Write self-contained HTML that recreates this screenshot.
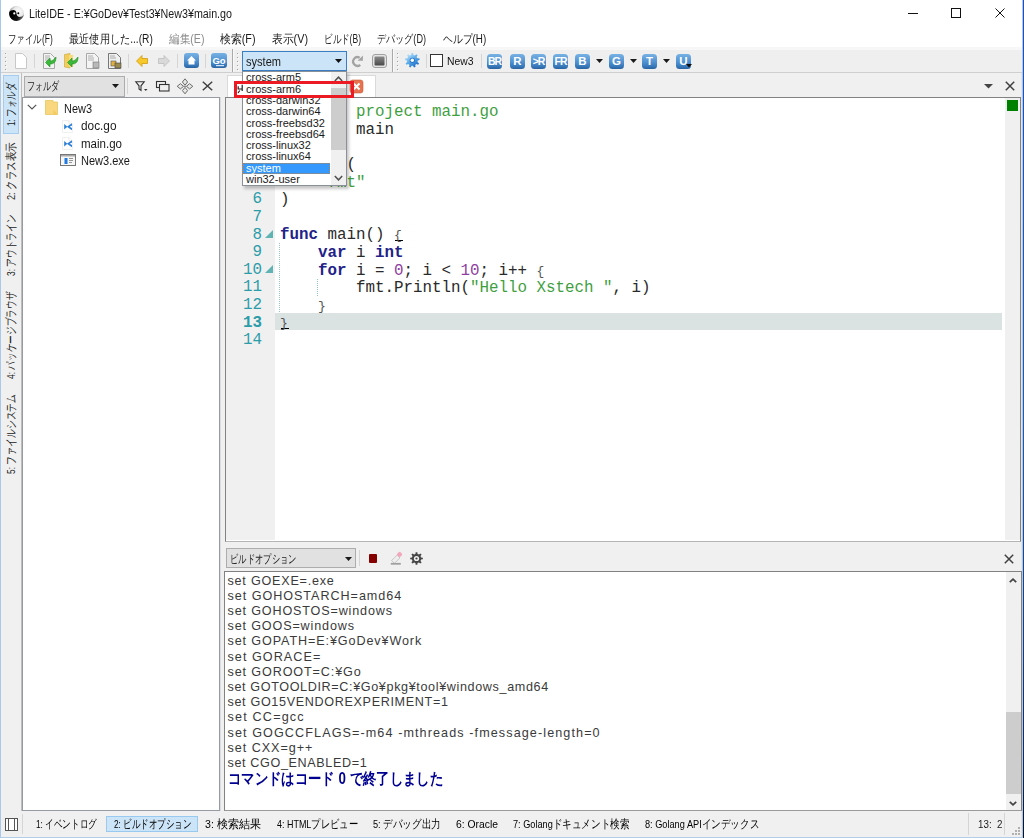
<!DOCTYPE html>
<html><head><meta charset="utf-8">
<style>
*{box-sizing:border-box;margin:0;padding:0}
html,body{width:1024px;height:838px;overflow:hidden}
body{position:relative;background:#f0f0f0;font-family:"Liberation Sans",sans-serif;color:#000;font-size:12px}
.a{position:absolute}
.t{position:absolute;white-space:pre;line-height:1}
svg{position:absolute;overflow:visible}
.code{position:absolute;font-family:"Liberation Mono",monospace;font-size:15.83px;line-height:17.6px;white-space:pre;color:#2a2a2a}
.kw{color:#222288;font-weight:bold}
.br{color:#555;font-size:13px}
.cm{color:#3f9f3f}
.st{color:#3f9f3f}
.nm{color:#8f3f9f}
.ln{position:absolute;font-family:"Liberation Mono",monospace;font-size:15.83px;line-height:17.6px;white-space:pre;color:#2b9ca8;text-align:right;width:40px}
</style></head><body>
<div class="a" style="left:0px;top:0px;width:1024px;height:47px;background:#fff"></div>
<div class="a" style="left:0px;top:47px;width:1024px;height:3px;background:#f7f7f7"></div>
<div class="a" style="left:0px;top:50px;width:1024px;height:22px;background:#efefef"></div>
<div class="a" style="left:0px;top:72px;width:1024px;height:1px;background:#cfcfcf"></div>
<svg style="left:8.8px;top:6px" width="15" height="15" viewBox="0 0 15 15">
<defs><radialGradient id="yw" cx="0.62" cy="0.38" r="0.62"><stop offset="0" stop-color="#fff"/><stop offset="0.55" stop-color="#e8e8e8"/><stop offset="1" stop-color="#8a8a8a"/></radialGradient>
<linearGradient id="yb" x1="0.2" y1="0.4" x2="1" y2="0.8"><stop offset="0" stop-color="#000"/><stop offset="0.55" stop-color="#151515"/><stop offset="1" stop-color="#8a8a8a"/></linearGradient></defs>
<circle cx="7.5" cy="7.5" r="7.4" fill="url(#yw)"/>
<path d="M0.1 7.5 A7.4 7.4 0 0 0 14.9 7.5 A3.7 3.7 0 0 1 7.5 7.5 A3.7 3.7 0 0 0 0.1 7.5 Z" fill="url(#yb)" transform="rotate(-5 7.5 7.5)"/>
<circle cx="5.3" cy="7.4" r="1.1" fill="#fff"/><circle cx="9.3" cy="7.2" r="1.0" fill="#000"/>
</svg>
<div id="t1" class="t" style="left:29px;top:7.5px;font-size:12px;color:#1a1a1a;transform:scaleX(0.8925);transform-origin:0 0;">LiteIDE - E:¥GoDev¥Test3¥New3¥main.go</div>
<div class="a" style="left:908px;top:13px;width:10px;height:1px;background:#111"></div>
<div class="a" style="left:951px;top:8px;width:10px;height:10px;border:1px solid #111"></div>
<svg style="left:995px;top:8px" width="10" height="10" viewBox="0 0 10 10"><path d="M0.5 0.5 L9.5 9.5 M9.5 0.5 L0.5 9.5" stroke="#111" stroke-width="1"/></svg>
<div id="t2" class="t" style="left:8px;top:33px;font-size:12px;color:#1a1a1a;transform:scaleX(0.7058);transform-origin:0 0;">ファイル(F)</div>
<div id="t3" class="t" style="left:69px;top:33px;font-size:12px;color:#1a1a1a;transform:scaleX(0.8493);transform-origin:0 0;">最近使用した...(R)</div>
<div id="t4" class="t" style="left:168.5px;top:33px;font-size:12px;color:#8d8d8d;transform:scaleX(0.8875);transform-origin:0 0;">編集(E)</div>
<div id="t5" class="t" style="left:220px;top:33px;font-size:12px;color:#1a1a1a;transform:scaleX(0.9027);transform-origin:0 0;">検索(F)</div>
<div id="t6" class="t" style="left:272px;top:33px;font-size:12px;color:#1a1a1a;transform:scaleX(0.9000);transform-origin:0 0;">表示(V)</div>
<div id="t7" class="t" style="left:324px;top:33px;font-size:12px;color:#1a1a1a;transform:scaleX(0.7115);transform-origin:0 0;">ビルド(B)</div>
<div id="t8" class="t" style="left:377px;top:33px;font-size:12px;color:#1a1a1a;transform:scaleX(0.7577);transform-origin:0 0;">デバッグ(D)</div>
<div id="t9" class="t" style="left:442.5px;top:33px;font-size:12px;color:#1a1a1a;transform:scaleX(0.8202);transform-origin:0 0;">ヘルプ(H)</div>
<div class="a" style="left:5px;top:53px;width:1px;height:1px;background:#a0a0a0"></div>
<div class="a" style="left:6px;top:54px;width:1px;height:1px;background:#fff"></div>
<div class="a" style="left:5px;top:57px;width:1px;height:1px;background:#a0a0a0"></div>
<div class="a" style="left:6px;top:58px;width:1px;height:1px;background:#fff"></div>
<div class="a" style="left:5px;top:61px;width:1px;height:1px;background:#a0a0a0"></div>
<div class="a" style="left:6px;top:62px;width:1px;height:1px;background:#fff"></div>
<div class="a" style="left:5px;top:65px;width:1px;height:1px;background:#a0a0a0"></div>
<div class="a" style="left:6px;top:66px;width:1px;height:1px;background:#fff"></div>
<div class="a" style="left:5px;top:69px;width:1px;height:1px;background:#a0a0a0"></div>
<div class="a" style="left:6px;top:70px;width:1px;height:1px;background:#fff"></div>
<svg style="left:14px;top:53px" width="14" height="16" viewBox="0 0 14 16"><path d="M1.5 0.5 H8.5 L12.5 4.5 V15.5 H1.5 Z" fill="#fff" stroke="#c8c8c8"/></svg>
<div class="a" style="left:34px;top:54px;width:1px;height:14px;background:#d5d5d5"></div>
<svg style="left:43px;top:53px" width="14" height="16" viewBox="0 0 14 16"><path d="M0.5 0.5 H7.5 L11.5 4.5 V15.5 H0.5 Z" fill="#f4f4f4" stroke="#a8a8a8"/><path d="M2 3h5M2 5h5M2 7h6" stroke="#9a9a9a" stroke-width="0.8"/><path d="M13 4 C13 9 11 11 7 11 L7 14 L2.5 9.5 L7 5 L7 8 C9.5 8 10.5 7 13 4Z" fill="#3cb83c" stroke="#1f8f1f" stroke-width="0.6"/></svg>
<svg style="left:64px;top:53px" width="14" height="16" viewBox="0 0 14 16"><path d="M0.5 1.5 L6 0.5 V15 L0.5 14 Z" fill="#f2cd5b" stroke="#c9a53a" stroke-width="0.6"/><path d="M5 2 H9 V14 H5 Z" fill="#f7da7a"/><path d="M14 4 C14 9 12 11 8 11 L8 14 L3.5 9.5 L8 5 L8 8 C10.5 8 11.5 7 14 4Z" fill="#3cb83c" stroke="#1f8f1f" stroke-width="0.6"/></svg>
<svg style="left:86px;top:53px" width="14" height="16" viewBox="0 0 14 16"><path d="M0.5 0.5 H8.5 L12.5 4.5 V15.5 H0.5 Z" fill="#f4f4f4" stroke="#a8a8a8"/><path d="M2 3h5M2 5h6M2 7h6" stroke="#a0a0a0" stroke-width="0.8"/><rect x="7" y="9" width="6" height="6" fill="#b8b8b8" stroke="#777" stroke-width="0.6"/></svg>
<svg style="left:108px;top:53px" width="14" height="16" viewBox="0 0 14 16"><path d="M0.5 0.5 H8.5 L12.5 4.5 V15.5 H0.5 Z" fill="#f0f0f0" stroke="#777"/><path d="M2 3h5M2 5h6" stroke="#999" stroke-width="0.8"/><rect x="3" y="8" width="5" height="5" fill="#e0b040" stroke="#555" stroke-width="0.6"/><rect x="7" y="10" width="6" height="5" fill="#9a8a50" stroke="#444" stroke-width="0.6"/></svg>
<div class="a" style="left:128px;top:54px;width:1px;height:14px;background:#d5d5d5"></div>
<svg style="left:136px;top:55px" width="12" height="12" viewBox="0 0 12 12"><path d="M0.5 6 L6 0.5 V3.5 H11.5 V8.5 H6 V11.5 Z" fill="#f7c82a" stroke="#d19a10" stroke-width="0.8"/></svg>
<svg style="left:158px;top:55px" width="12" height="12" viewBox="0 0 12 12"><path d="M11.5 6 L6 0.5 V3.5 H0.5 V8.5 H6 V11.5 Z" fill="#d9d9d9" stroke="#bdbdbd" stroke-width="0.8"/></svg>
<div class="a" style="left:177px;top:54px;width:1px;height:14px;background:#d5d5d5"></div>
<svg style="left:184px;top:53px" width="15" height="15" viewBox="0 0 15 15"><defs><linearGradient id="bl" x1="0" y1="0" x2="0" y2="1"><stop offset="0" stop-color="#78b2e4"/><stop offset="0.55" stop-color="#4f90d0"/><stop offset="0.8" stop-color="#3a7bbd"/><stop offset="1" stop-color="#2a62a0"/></linearGradient></defs><rect x="0" y="0" width="15" height="15" rx="3" fill="url(#bl)"/><path d="M7.5 3 L12 7.5 H10.5 V11.5 H4.5 V7.5 H3 Z" fill="#fff"/></svg>
<div class="a" style="left:205px;top:54px;width:1px;height:14px;background:#d5d5d5"></div>
<svg style="left:211px;top:53px" width="16" height="15" viewBox="0 0 16 15"><rect x="0" y="0" width="16" height="15" rx="3" fill="url(#bl)"/><text x="8" y="10.5" font-family="Liberation Sans" font-weight="bold" font-size="9.5" fill="#fff" text-anchor="middle">Go</text><rect x="5" y="12" width="8" height="1.2" fill="#cfe4f7"/></svg>
<div class="a" style="left:232px;top:49px;width:1px;height:23px;background:#a9a9a9"></div>
<div class="a" style="left:233px;top:50px;width:1px;height:22px;background:#fafafa"></div>
<div class="a" style="left:237px;top:53px;width:1px;height:1px;background:#a0a0a0"></div>
<div class="a" style="left:238px;top:54px;width:1px;height:1px;background:#fff"></div>
<div class="a" style="left:237px;top:57px;width:1px;height:1px;background:#a0a0a0"></div>
<div class="a" style="left:238px;top:58px;width:1px;height:1px;background:#fff"></div>
<div class="a" style="left:237px;top:61px;width:1px;height:1px;background:#a0a0a0"></div>
<div class="a" style="left:238px;top:62px;width:1px;height:1px;background:#fff"></div>
<div class="a" style="left:237px;top:65px;width:1px;height:1px;background:#a0a0a0"></div>
<div class="a" style="left:238px;top:66px;width:1px;height:1px;background:#fff"></div>
<div class="a" style="left:237px;top:69px;width:1px;height:1px;background:#a0a0a0"></div>
<div class="a" style="left:238px;top:70px;width:1px;height:1px;background:#fff"></div>
<svg style="left:352px;top:55px" width="12" height="12" viewBox="0 0 12 12"><path d="M7.65 2.78 A4.3 4.3 0 1 0 8.26 9.79" fill="none" stroke="#a3a3a3" stroke-width="2.3"/><path d="M10.9 0.4 V5.8 H5.6 Z" fill="#a3a3a3"/></svg>
<svg style="left:372px;top:54px" width="15" height="14" viewBox="0 0 15 14"><defs><linearGradient id="sg" x1="0" y1="0" x2="0" y2="1"><stop offset="0" stop-color="#8a8a8a"/><stop offset="1" stop-color="#4a4a4a"/></linearGradient></defs><rect x="0.5" y="0.5" width="14" height="13" rx="2.5" fill="#e4e4e4" stroke="#a0a0a0"/><rect x="2.5" y="2.5" width="10" height="9" rx="1" fill="url(#sg)"/></svg>
<div class="a" style="left:392px;top:49px;width:1px;height:23px;background:#a9a9a9"></div>
<div class="a" style="left:393px;top:50px;width:1px;height:22px;background:#fafafa"></div>
<div class="a" style="left:397px;top:53px;width:1px;height:1px;background:#a0a0a0"></div>
<div class="a" style="left:398px;top:54px;width:1px;height:1px;background:#fff"></div>
<div class="a" style="left:397px;top:57px;width:1px;height:1px;background:#a0a0a0"></div>
<div class="a" style="left:398px;top:58px;width:1px;height:1px;background:#fff"></div>
<div class="a" style="left:397px;top:61px;width:1px;height:1px;background:#a0a0a0"></div>
<div class="a" style="left:398px;top:62px;width:1px;height:1px;background:#fff"></div>
<div class="a" style="left:397px;top:65px;width:1px;height:1px;background:#a0a0a0"></div>
<div class="a" style="left:398px;top:66px;width:1px;height:1px;background:#fff"></div>
<div class="a" style="left:397px;top:69px;width:1px;height:1px;background:#a0a0a0"></div>
<div class="a" style="left:398px;top:70px;width:1px;height:1px;background:#fff"></div>
<svg style="left:405px;top:53px" width="15" height="15" viewBox="0 0 15 15"><defs><linearGradient id="gg" x1="0.2" y1="0.1" x2="0.8" y2="0.9"><stop offset="0" stop-color="#b8e0fa"/><stop offset="0.5" stop-color="#58a8e8"/><stop offset="1" stop-color="#1a6cc8"/></linearGradient></defs><path d="M6.18 2.02 L6.44 0.05 L8.16 0.05 L8.42 2.02 L9.84 2.53 L11.30 1.19 L12.62 2.30 L11.56 3.98 L12.31 5.28 L14.29 5.19 L14.59 6.89 L12.70 7.49 L12.44 8.97 L14.01 10.18 L13.15 11.67 L11.31 10.91 L10.16 11.88 L10.59 13.82 L8.97 14.41 L8.05 12.65 L6.55 12.65 L5.63 14.41 L4.01 13.82 L4.44 11.88 L3.29 10.91 L1.45 11.67 L0.59 10.18 L2.16 8.97 L1.90 7.49 L0.01 6.89 L0.31 5.19 L2.29 5.28 L3.04 3.98 L1.98 2.30 L3.30 1.19 L4.76 2.53 Z" fill="url(#gg)"/><circle cx="7.3" cy="7.3" r="2.6" fill="#2a78c8"/><circle cx="7.3" cy="7.3" r="1.7" fill="#fff"/></svg>
<div class="a" style="left:426px;top:54px;width:1px;height:14px;background:#d5d5d5"></div>
<div class="a" style="left:430px;top:54px;width:13px;height:13px;border:1px solid #333;background:#fff"></div>
<div id="t10" class="t" style="left:447px;top:55.5px;font-size:11.5px;color:#111;transform:scaleX(0.9012);transform-origin:0 0;">New3</div>
<div class="a" style="left:481px;top:54px;width:1px;height:14px;background:#d5d5d5"></div>
<svg style="left:487px;top:53.5px" width="15" height="15" viewBox="0 0 15 15"><rect x="0" y="0" width="15" height="15" rx="3.5" fill="url(#bl)"/><text x="7.5" y="11.3" font-family="Liberation Sans" font-weight="bold" font-size="10.5" fill="#fff" text-anchor="middle" letter-spacing="-1">BR</text></svg>
<svg style="left:509.5px;top:53.5px" width="15" height="15" viewBox="0 0 15 15"><rect x="0" y="0" width="15" height="15" rx="3.5" fill="url(#bl)"/><text x="7.5" y="11.3" font-family="Liberation Sans" font-weight="bold" font-size="11.5" fill="#fff" text-anchor="middle" letter-spacing="0">R</text></svg>
<svg style="left:531px;top:53.5px" width="15" height="15" viewBox="0 0 15 15"><rect x="0" y="0" width="15" height="15" rx="3.5" fill="url(#bl)"/><text x="7.5" y="11.3" font-family="Liberation Sans" font-weight="bold" font-size="10.5" fill="#fff" text-anchor="middle" letter-spacing="-1">&gt;R</text></svg>
<svg style="left:552.5px;top:53.5px" width="15" height="15" viewBox="0 0 15 15"><rect x="0" y="0" width="15" height="15" rx="3.5" fill="url(#bl)"/><text x="7.5" y="11.3" font-family="Liberation Sans" font-weight="bold" font-size="10.5" fill="#fff" text-anchor="middle" letter-spacing="-1">FR</text></svg>
<svg style="left:575px;top:53.5px" width="15" height="15" viewBox="0 0 15 15"><rect x="0" y="0" width="15" height="15" rx="3.5" fill="url(#bl)"/><text x="7.5" y="11.3" font-family="Liberation Sans" font-weight="bold" font-size="11.5" fill="#fff" text-anchor="middle" letter-spacing="0">B</text></svg>
<svg style="left:596px;top:59px" width="7" height="4" viewBox="0 0 7 4"><path d="M0 0 H7 L3.5 4 Z" fill="#1a1a1a"/></svg>
<svg style="left:608.5px;top:53.5px" width="15" height="15" viewBox="0 0 15 15"><rect x="0" y="0" width="15" height="15" rx="3.5" fill="url(#bl)"/><text x="7.5" y="11.3" font-family="Liberation Sans" font-weight="bold" font-size="11.5" fill="#fff" text-anchor="middle" letter-spacing="0">G</text></svg>
<svg style="left:629.5px;top:59px" width="7" height="4" viewBox="0 0 7 4"><path d="M0 0 H7 L3.5 4 Z" fill="#1a1a1a"/></svg>
<svg style="left:642px;top:53.5px" width="15" height="15" viewBox="0 0 15 15"><rect x="0" y="0" width="15" height="15" rx="3.5" fill="url(#bl)"/><text x="7.5" y="11.3" font-family="Liberation Sans" font-weight="bold" font-size="11.5" fill="#fff" text-anchor="middle" letter-spacing="0">T</text></svg>
<svg style="left:663px;top:59px" width="7" height="4" viewBox="0 0 7 4"><path d="M0 0 H7 L3.5 4 Z" fill="#1a1a1a"/></svg>
<svg style="left:675.5px;top:53.5px" width="15" height="15" viewBox="0 0 15 15"><rect x="0" y="0" width="15" height="15" rx="3.5" fill="url(#bl)"/><text x="7.5" y="11.3" font-family="Liberation Sans" font-weight="bold" font-size="11.5" fill="#fff" text-anchor="middle" letter-spacing="0">U</text></svg>
<svg style="left:686px;top:64px" width="6" height="4" viewBox="0 0 6 4"><path d="M0 0 H6 L3 3.5 Z" fill="#111"/></svg>
<div class="a" style="left:21px;top:73px;width:1px;height:738px;background:#bdbdbd"></div>
<div class="a" style="left:3px;top:75px;width:16px;height:59px;background:#cce4f7;border:1px solid #a6cdf0"></div>
<div id="t11" class="t" style="left:6.300000000000001px;top:125.5px;font-size:11.5px;color:#1a1a1a;transform-origin:0 0;transform:rotate(-90deg) scaleX(0.7155)">1: フォルダ</div>
<div id="t12" class="t" style="left:6.300000000000001px;top:200px;font-size:11.5px;color:#1a1a1a;transform-origin:0 0;transform:rotate(-90deg) scaleX(0.7967)">2: クラス表示</div>
<div id="t13" class="t" style="left:6.300000000000001px;top:275.5px;font-size:11.5px;color:#1a1a1a;transform-origin:0 0;transform:rotate(-90deg) scaleX(0.7253)">3: アウトライン</div>
<div id="t14" class="t" style="left:6.300000000000001px;top:378.5px;font-size:11.5px;color:#1a1a1a;transform-origin:0 0;transform:rotate(-90deg) scaleX(0.7244)">4: パッケージブラウザ</div>
<div id="t15" class="t" style="left:6.300000000000001px;top:474px;font-size:11.5px;color:#1a1a1a;transform-origin:0 0;transform:rotate(-90deg) scaleX(0.7353)">5: ファイルシステム</div>
<div class="a" style="left:24px;top:75.5px;width:101px;height:21px;background:#e1e1e1;border:1px solid #adadad"></div>
<div id="t16" class="t" style="left:27px;top:80px;font-size:12px;color:#1a1a1a;transform:scaleX(0.6771);transform-origin:0 0;">フォルダ</div>
<svg style="left:112px;top:84px" width="7" height="4" viewBox="0 0 7 4"><path d="M0 0 H7 L3.5 4 Z" fill="#1a1a1a"/></svg>
<div class="a" style="left:127px;top:78px;width:1px;height:16px;background:#d5d5d5"></div>
<svg style="left:135px;top:81px" width="13" height="11" viewBox="0 0 13 11"><path d="M0.8 0.8 H9.2 L6 4.8 V9.5 L4 8 V4.8 Z" fill="none" stroke="#333" stroke-width="1.1"/><path d="M9 8 H12.5 L10.75 10 Z" fill="#333"/></svg>
<svg style="left:156px;top:81px" width="14" height="11" viewBox="0 0 14 11"><rect x="0.5" y="0.5" width="9" height="6" fill="none" stroke="#333" stroke-width="1.1"/><rect x="3.5" y="3.5" width="9.5" height="6.5" fill="#efefef" stroke="#333" stroke-width="1.1"/></svg>
<svg style="left:177px;top:79px" width="16" height="15" viewBox="0 0 16 15"><path d="M8 -0.20000000000000018 L10.6 3 L8 6.2 L5.4 3 Z M8 8.399999999999999 L10.6 11.6 L8 14.8 L5.4 11.6 Z M3.4 4.699999999999999 L6.6 7.3 L3.4 9.9 L0.19999999999999973 7.3 Z M12.6 4.699999999999999 L15.8 7.3 L12.6 9.9 L9.399999999999999 7.3 Z" fill="#e6e8e4" stroke="#6a6a6a" stroke-width="1"/><path d="M7 7.3 H9" stroke="#777" stroke-width="1"/></svg>
<svg style="left:202px;top:81px" width="11" height="10" viewBox="0 0 11 10"><path d="M0.8 0.8 L10.2 9.2 M10.2 0.8 L0.8 9.2" stroke="#404040" stroke-width="1.5"/></svg>
<div class="a" style="left:22px;top:97px;width:198px;height:714px;background:#fff;border:1px solid #959aa3"></div>
<div class="a" style="left:220px;top:97px;width:1px;height:714px;background:#dadce0"></div>
<svg style="left:27px;top:104px" width="10" height="7" viewBox="0 0 10 7"><path d="M0.8 0.8 L5 5 L9.2 0.8" fill="none" stroke="#555" stroke-width="1.2"/></svg>
<svg style="left:45px;top:100px" width="13" height="15" viewBox="0 0 13 15"><path d="M0.5 0.5 H8 L8 2 H12.5 V14.5 H0.5 Z" fill="#f9d77e" stroke="#e9c560" stroke-width="0.8"/><path d="M8.5 10 V14.5 H12.5" fill="#f3c95a"/></svg>
<div id="t17" class="t" style="left:64px;top:102.5px;font-size:12.5px;color:#1a1a1a;transform:scaleX(0.8759);transform-origin:0 0;">New3</div>
<svg style="left:61px;top:119.5px" width="12" height="13" viewBox="0 0 12 13"><path d="M1.5 0.5 H8 L11.5 4 V12.5 H1.5 Z" fill="#fff" stroke="#ececec" stroke-width="0.8"/><path d="M8 0.5 L8 4 L11.5 4" fill="none" stroke="#ddd" stroke-width="0.6"/><path d="M3.2 4 L6.4 6.7 L3.2 9.4 Z" fill="#2b7fd6"/><path d="M5.8 6.7 L11 3.2 V10.2 Z" fill="#2b7fd6"/><path d="M8.6 6.7 L11 5.5 V7.9 Z" fill="#fff"/></svg>
<div id="t18" class="t" style="left:81px;top:120px;font-size:12.5px;color:#1a1a1a;transform:scaleX(0.9459);transform-origin:0 0;">doc.go</div>
<svg style="left:61px;top:137px" width="12" height="13" viewBox="0 0 12 13"><path d="M1.5 0.5 H8 L11.5 4 V12.5 H1.5 Z" fill="#fff" stroke="#ececec" stroke-width="0.8"/><path d="M8 0.5 L8 4 L11.5 4" fill="none" stroke="#ddd" stroke-width="0.6"/><path d="M3.2 4 L6.4 6.7 L3.2 9.4 Z" fill="#2b7fd6"/><path d="M5.8 6.7 L11 3.2 V10.2 Z" fill="#2b7fd6"/><path d="M8.6 6.7 L11 5.5 V7.9 Z" fill="#fff"/></svg>
<div id="t19" class="t" style="left:81px;top:137.5px;font-size:12.5px;color:#1a1a1a;transform:scaleX(0.9217);transform-origin:0 0;">main.go</div>
<svg style="left:60px;top:154px" width="16" height="12" viewBox="0 0 16 12"><rect x="0.5" y="0.5" width="15" height="11" fill="#f6f6f6" stroke="#777"/><rect x="1" y="1" width="14" height="1.5" fill="#aaa"/><rect x="4.5" y="4" width="3" height="6" fill="#1e7ae0"/><path d="M9 4.5h4M9 6.5h4M9 8.5h3" stroke="#8a8a8a" stroke-width="0.9"/></svg>
<div id="t20" class="t" style="left:81px;top:154.5px;font-size:12.5px;color:#1a1a1a;transform:scaleX(0.8814);transform-origin:0 0;">New3.exe</div>
<div class="a" style="left:227px;top:75px;width:149px;height:22px;background:#fff;border:1px solid #dadada;border-bottom:none"></div>
<svg style="left:350px;top:79.5px" width="13" height="13" viewBox="0 0 13 13"><rect x="0" y="0" width="13" height="13" rx="2.5" fill="#e5734f" stroke="#c95a38" stroke-width="0.6"/><path d="M3.5 3.5 L9.5 9.5 M9.5 3.5 L3.5 9.5" stroke="#fff" stroke-width="2"/></svg>
<svg style="left:984px;top:84px" width="9" height="4.5" viewBox="0 0 9 4.5"><path d="M0 0 H9 L4.5 4.5 Z" fill="#444"/></svg>
<svg style="left:1005px;top:81px" width="10" height="10" viewBox="0 0 10 10"><path d="M0.8 0.8 L9.2 9.2 M9.2 0.8 L0.8 9.2" stroke="#404040" stroke-width="1.5"/></svg>
<div class="a" style="left:225px;top:97px;width:796px;height:445px;background:#fff;border:1px solid #828282;border-bottom-color:#b5b5b5"></div>
<div class="a" style="left:226px;top:98px;width:49px;height:442px;background:#f0f0f0"></div>
<div class="a" style="left:1005px;top:98px;width:15px;height:442px;background:#f0f0f0"></div>
<div class="a" style="left:1007px;top:100px;width:11px;height:11px;background:#008000"></div>
<div class="a" style="left:275px;top:313px;width:727px;height:17px;background:#dae2e2"></div>
<div class="ln" style="left:222px;top:103.3px;">1</div>
<div class="ln" style="left:222px;top:120.9px;">2</div>
<div class="ln" style="left:222px;top:138.5px;">3</div>
<div class="ln" style="left:222px;top:156.1px;">4</div>
<div class="ln" style="left:222px;top:173.7px;">5</div>
<div class="ln" style="left:222px;top:191.3px;">6</div>
<div class="ln" style="left:222px;top:208.9px;">7</div>
<div class="ln" style="left:222px;top:226.5px;">8</div>
<div class="ln" style="left:222px;top:244.10000000000002px;">9</div>
<div class="ln" style="left:222px;top:261.7px;">10</div>
<div class="ln" style="left:222px;top:279.3px;">11</div>
<div class="ln" style="left:222px;top:296.90000000000003px;">12</div>
<div class="ln" style="left:222px;top:314.5px;font-weight:bold;">13</div>
<div class="ln" style="left:222px;top:332.1px;">14</div>
<svg style="left:265px;top:159.1px" width="8" height="8" viewBox="0 0 8 8"><path d="M8 0 V8 H0 Z" fill="#5fb3b3"/></svg>
<svg style="left:265px;top:229.5px" width="8" height="8" viewBox="0 0 8 8"><path d="M8 0 V8 H0 Z" fill="#5fb3b3"/></svg>
<svg style="left:265px;top:264.7px" width="8" height="8" viewBox="0 0 8 8"><path d="M8 0 V8 H0 Z" fill="#5fb3b3"/></svg>
<div class="a" style="left:279px;top:242.5px;width:1px;height:1px;background:#8fc8c8"></div>
<div class="a" style="left:279px;top:244.5px;width:1px;height:1px;background:#8fc8c8"></div>
<div class="a" style="left:279px;top:246.5px;width:1px;height:1px;background:#8fc8c8"></div>
<div class="a" style="left:279px;top:248.5px;width:1px;height:1px;background:#8fc8c8"></div>
<div class="a" style="left:279px;top:250.5px;width:1px;height:1px;background:#8fc8c8"></div>
<div class="a" style="left:279px;top:252.5px;width:1px;height:1px;background:#8fc8c8"></div>
<div class="a" style="left:279px;top:254.5px;width:1px;height:1px;background:#8fc8c8"></div>
<div class="a" style="left:279px;top:256.5px;width:1px;height:1px;background:#8fc8c8"></div>
<div class="a" style="left:279px;top:258.5px;width:1px;height:1px;background:#8fc8c8"></div>
<div class="a" style="left:279px;top:260.5px;width:1px;height:1px;background:#8fc8c8"></div>
<div class="a" style="left:279px;top:262.5px;width:1px;height:1px;background:#8fc8c8"></div>
<div class="a" style="left:279px;top:264.5px;width:1px;height:1px;background:#8fc8c8"></div>
<div class="a" style="left:279px;top:266.5px;width:1px;height:1px;background:#8fc8c8"></div>
<div class="a" style="left:279px;top:268.5px;width:1px;height:1px;background:#8fc8c8"></div>
<div class="a" style="left:279px;top:270.5px;width:1px;height:1px;background:#8fc8c8"></div>
<div class="a" style="left:279px;top:272.5px;width:1px;height:1px;background:#8fc8c8"></div>
<div class="a" style="left:279px;top:274.5px;width:1px;height:1px;background:#8fc8c8"></div>
<div class="a" style="left:279px;top:276.5px;width:1px;height:1px;background:#8fc8c8"></div>
<div class="a" style="left:279px;top:278.5px;width:1px;height:1px;background:#8fc8c8"></div>
<div class="a" style="left:279px;top:280.5px;width:1px;height:1px;background:#8fc8c8"></div>
<div class="a" style="left:279px;top:282.5px;width:1px;height:1px;background:#8fc8c8"></div>
<div class="a" style="left:279px;top:284.5px;width:1px;height:1px;background:#8fc8c8"></div>
<div class="a" style="left:279px;top:286.5px;width:1px;height:1px;background:#8fc8c8"></div>
<div class="a" style="left:279px;top:288.5px;width:1px;height:1px;background:#8fc8c8"></div>
<div class="a" style="left:279px;top:290.5px;width:1px;height:1px;background:#8fc8c8"></div>
<div class="a" style="left:279px;top:292.5px;width:1px;height:1px;background:#8fc8c8"></div>
<div class="a" style="left:279px;top:294.5px;width:1px;height:1px;background:#8fc8c8"></div>
<div class="a" style="left:279px;top:296.5px;width:1px;height:1px;background:#8fc8c8"></div>
<div class="a" style="left:279px;top:298.5px;width:1px;height:1px;background:#8fc8c8"></div>
<div class="a" style="left:279px;top:300.5px;width:1px;height:1px;background:#8fc8c8"></div>
<div class="a" style="left:279px;top:302.5px;width:1px;height:1px;background:#8fc8c8"></div>
<div class="a" style="left:279px;top:304.5px;width:1px;height:1px;background:#8fc8c8"></div>
<div class="a" style="left:279px;top:306.5px;width:1px;height:1px;background:#8fc8c8"></div>
<div class="a" style="left:279px;top:308.5px;width:1px;height:1px;background:#8fc8c8"></div>
<div class="a" style="left:279px;top:310.5px;width:1px;height:1px;background:#8fc8c8"></div>
<div class="a" style="left:317px;top:278.5px;width:1px;height:1px;background:#8fc8c8"></div>
<div class="a" style="left:317px;top:280.5px;width:1px;height:1px;background:#8fc8c8"></div>
<div class="a" style="left:317px;top:282.5px;width:1px;height:1px;background:#8fc8c8"></div>
<div class="a" style="left:317px;top:284.5px;width:1px;height:1px;background:#8fc8c8"></div>
<div class="a" style="left:317px;top:286.5px;width:1px;height:1px;background:#8fc8c8"></div>
<div class="a" style="left:317px;top:288.5px;width:1px;height:1px;background:#8fc8c8"></div>
<div class="a" style="left:317px;top:290.5px;width:1px;height:1px;background:#8fc8c8"></div>
<div class="a" style="left:317px;top:292.5px;width:1px;height:1px;background:#8fc8c8"></div>
<div class="a" style="left:317px;top:294.5px;width:1px;height:1px;background:#8fc8c8"></div>
<div class="a" style="left:394.5px;top:239.5px;width:8px;height:1px;background:#000"></div>
<div class="a" style="left:280.5px;top:327.5px;width:8px;height:1px;background:#000"></div>
<div class="code" style="left:280px;top:104.3px"><span class="cm">// New3 project main.go</span>
<span class="kw">package</span> main

<span class="kw">import</span> (
    <span class="st">"fmt"</span>
)

<span class="kw">func</span> main() <span class="br">{</span>
    <span class="kw">var</span> i <span class="kw">int</span>
    <span class="kw">for</span> i = <span class="nm">0</span>; i &lt; <span class="nm">10</span>; i++ <span class="br">{</span>
        fmt.Println(<span class="st">"Hello Xstech "</span>, i)
    <span class="br">}</span>
<span class="br">}</span>
</div>
<div class="a" style="left:226px;top:548px;width:130px;height:20px;background:#e1e1e1;border:1px solid #adadad"></div>
<div id="t21" class="t" style="left:229.5px;top:552.5px;font-size:12px;color:#1a1a1a;transform:scaleX(0.6927);transform-origin:0 0;">ビルドオプション</div>
<svg style="left:344.5px;top:556.5px" width="7" height="4" viewBox="0 0 7 4"><path d="M0 0 H7 L3.5 4 Z" fill="#1a1a1a"/></svg>
<div class="a" style="left:359px;top:550px;width:1px;height:16px;background:#d5d5d5"></div>
<div class="a" style="left:369px;top:554.3px;width:8.2px;height:8.4px;background:#870000;border-radius:1px"></div>
<svg style="left:389px;top:551px" width="14" height="14" viewBox="0 0 14 14"><path d="M2.6 9.6 L8.2 4 L11 6.8 L5.4 12.4 Z" fill="#eeeeee" stroke="#bdbdbd" stroke-width="0.8"/><path d="M7.6 3.4 L9.8 1.2 Q10.6 0.5 11.4 1.2 L12.8 2.6 Q13.5 3.4 12.8 4.2 L10.6 6.4 Z" fill="#f2a7bd"/><path d="M1.8 12.8 H11.8" stroke="#a0a0a0" stroke-width="1.8"/></svg>
<svg style="left:410px;top:552px" width="13" height="13" viewBox="0 0 13 13"><path d="M5.40 1.93 L5.65 0.16 L7.35 0.16 L7.60 1.93 L8.96 2.49 L10.38 1.41 L11.59 2.62 L10.51 4.04 L11.07 5.40 L12.84 5.65 L12.84 7.35 L11.07 7.60 L10.51 8.96 L11.59 10.38 L10.38 11.59 L8.96 10.51 L7.60 11.07 L7.35 12.84 L5.65 12.84 L5.40 11.07 L4.04 10.51 L2.62 11.59 L1.41 10.38 L2.49 8.96 L1.93 7.60 L0.16 7.35 L0.16 5.65 L1.93 5.40 L2.49 4.04 L1.41 2.62 L2.62 1.41 L4.04 2.49 Z" fill="#474747"/><circle cx="6.5" cy="6.5" r="2.6" fill="#f0f0f0"/><circle cx="6.5" cy="6.5" r="1.1" fill="#474747"/></svg>
<svg style="left:1004px;top:554px" width="10" height="10" viewBox="0 0 10 10"><path d="M0.8 0.8 L9.2 9.2 M9.2 0.8 L0.8 9.2" stroke="#404040" stroke-width="1.5"/></svg>
<div class="a" style="left:224px;top:571px;width:798px;height:240px;background:#fff;border:1px solid #828282;border-bottom-color:#9a9a9a"></div>
<div class="a" style="left:1006px;top:572px;width:15px;height:238px;background:#f0f0f0"></div>
<div class="a" style="left:1006px;top:711.5px;width:15px;height:82px;background:#cdcdcd"></div>
<svg style="left:1008.5px;top:578px" width="8" height="5" viewBox="0 0 8 5"><path d="M0.8 4.2 L4 1.2 L7.2 4.2" fill="none" stroke="#444" stroke-width="1.8"/></svg>
<svg style="left:1008.5px;top:800.5px" width="8" height="5" viewBox="0 0 8 5"><path d="M0.8 0.8 L4 3.8 L7.2 0.8" fill="none" stroke="#444" stroke-width="1.8"/></svg>
<div id="t22" class="t" style="left:227.5px;top:574.8px;font-size:12.6px;color:#3a3a3a;letter-spacing:0.775px;">set GOEXE=.exe</div>
<div id="t23" class="t" style="left:227.5px;top:589.9699999999999px;font-size:12.6px;color:#3a3a3a;letter-spacing:0.960px;">set GOHOSTARCH=amd64</div>
<div id="t24" class="t" style="left:227.5px;top:605.14px;font-size:12.6px;color:#3a3a3a;letter-spacing:0.843px;">set GOHOSTOS=windows</div>
<div id="t25" class="t" style="left:227.5px;top:620.31px;font-size:12.6px;color:#3a3a3a;letter-spacing:0.853px;">set GOOS=windows</div>
<div id="t26" class="t" style="left:227.5px;top:635.4799999999999px;font-size:12.6px;color:#3a3a3a;letter-spacing:0.891px;">set GOPATH=E:¥GoDev¥Work</div>
<div id="t27" class="t" style="left:227.5px;top:650.65px;font-size:12.6px;color:#3a3a3a;letter-spacing:1.050px;">set GORACE=</div>
<div id="t28" class="t" style="left:227.5px;top:665.8199999999999px;font-size:12.6px;color:#3a3a3a;letter-spacing:0.879px;">set GOROOT=C:¥Go</div>
<div id="t29" class="t" style="left:227.5px;top:680.99px;font-size:12.6px;color:#3a3a3a;letter-spacing:0.630px;">set GOTOOLDIR=C:¥Go¥pkg¥tool¥windows_amd64</div>
<div id="t30" class="t" style="left:227.5px;top:696.16px;font-size:12.6px;color:#3a3a3a;letter-spacing:0.657px;">set GO15VENDOREXPERIMENT=1</div>
<div id="t31" class="t" style="left:227.5px;top:711.3299999999999px;font-size:12.6px;color:#3a3a3a;letter-spacing:1.190px;">set CC=gcc</div>
<div id="t32" class="t" style="left:227.5px;top:726.5px;font-size:12.6px;color:#3a3a3a;letter-spacing:1.096px;">set GOGCCFLAGS=-m64 -mthreads -fmessage-length=0</div>
<div id="t33" class="t" style="left:227.5px;top:741.67px;font-size:12.6px;color:#3a3a3a;letter-spacing:0.967px;">set CXX=g++</div>
<div id="t34" class="t" style="left:227.5px;top:756.8399999999999px;font-size:12.6px;color:#3a3a3a;letter-spacing:0.629px;">set CGO_ENABLED=1</div>
<div id="t35" class="t" style="left:227.5px;top:771.01px;font-size:16px;color:#000090;font-weight:bold;transform:scaleX(0.8340);transform-origin:0 0;">コマンドはコード 0 で終了しました</div>
<svg style="left:5px;top:817.5px" width="13" height="13" viewBox="0 0 13 13"><rect x="0.5" y="0.5" width="12" height="12" fill="#fff" stroke="#555"/><path d="M3.5 0.5 V12.5 M9.5 0.5 V12.5" stroke="#555"/></svg>
<div class="a" style="left:22px;top:814px;width:1px;height:20px;background:#d5d5d5"></div>
<div id="t36" class="t" style="left:36px;top:819.3px;font-size:11.5px;color:#000;transform:scaleX(0.7194);transform-origin:0 0;">1: イベントログ</div>
<div class="a" style="left:106px;top:816px;width:92px;height:16px;background:#cce4f7;border:1px solid #99c9ef"></div>
<div id="t37" class="t" style="left:113.5px;top:819.3px;font-size:11.5px;color:#000;transform:scaleX(0.7123);transform-origin:0 0;">2: ビルドオプション</div>
<div id="t38" class="t" style="left:205px;top:819.3px;font-size:11.5px;color:#000;transform:scaleX(0.9211);transform-origin:0 0;">3: 検索結果</div>
<div id="t39" class="t" style="left:276.5px;top:819.3px;font-size:11.5px;color:#000;transform:scaleX(0.7781);transform-origin:0 0;">4: HTMLプレビュー</div>
<div id="t40" class="t" style="left:373px;top:819.3px;font-size:11.5px;color:#000;transform:scaleX(0.7984);transform-origin:0 0;">5: デバッグ出力</div>
<div id="t41" class="t" style="left:456px;top:819.3px;font-size:11.5px;color:#000;transform:scaleX(0.8999);transform-origin:0 0;">6: Oracle</div>
<div id="t42" class="t" style="left:512.8px;top:819.3px;font-size:11.5px;color:#000;transform:scaleX(0.7966);transform-origin:0 0;">7: Golangドキュメント検索</div>
<div id="t43" class="t" style="left:644.8px;top:819.3px;font-size:11.5px;color:#000;transform:scaleX(0.7988);transform-origin:0 0;">8: Golang APIインデックス</div>
<div class="a" style="left:968px;top:813px;width:1px;height:22px;background:#d5d5d5"></div>
<div class="a" style="left:1004px;top:813px;width:1px;height:22px;background:#d5d5d5"></div>
<div id="t44" class="t" style="left:977.5px;top:819px;font-size:11.5px;color:#1a1a1a;transform:scaleX(0.8512);transform-origin:0 0;">13:  2</div>
<div class="a" style="left:1018px;top:827px;width:1.5px;height:1.5px;background:#b0b0b0"></div>
<div class="a" style="left:1015px;top:830px;width:1.5px;height:1.5px;background:#b0b0b0"></div>
<div class="a" style="left:1018px;top:830px;width:1.5px;height:1.5px;background:#b0b0b0"></div>
<div class="a" style="left:1012px;top:833px;width:1.5px;height:1.5px;background:#b0b0b0"></div>
<div class="a" style="left:1015px;top:833px;width:1.5px;height:1.5px;background:#b0b0b0"></div>
<div class="a" style="left:1018px;top:833px;width:1.5px;height:1.5px;background:#b0b0b0"></div>
<div class="a" style="left:242px;top:50.5px;width:105px;height:20.5px;background:#cce4f7;border:1px solid #3a7ec6"></div>
<div id="t45" class="t" style="left:245.5px;top:55.5px;font-size:12.5px;color:#1a1a1a;transform:scaleX(0.8840);transform-origin:0 0;">system</div>
<svg style="left:334.5px;top:59px" width="7" height="4" viewBox="0 0 7 4"><path d="M0 0 H7 L3.5 4 Z" fill="#111"/></svg>
<div class="a" style="left:244px;top:73px;width:105px;height:116px;background:rgba(0,0,0,0.22);filter:blur(1.6px)"></div>
<div class="a" style="left:242px;top:71px;width:105px;height:115px;background:#fff;border:1px solid #8a9098"></div>
<div class="a" style="left:331px;top:72px;width:15px;height:113px;background:#f0f0f0"></div>
<div class="a" style="left:331px;top:88px;width:15px;height:62px;background:#cdcdcd"></div>
<svg style="left:334px;top:76px" width="9" height="6" viewBox="0 0 9 6"><path d="M0.8 5 L4.5 1.2 L8.2 5" fill="none" stroke="#505050" stroke-width="1.5"/></svg>
<svg style="left:334px;top:175px" width="9" height="6" viewBox="0 0 9 6"><path d="M0.8 1 L4.5 4.8 L8.2 1" fill="none" stroke="#505050" stroke-width="1.5"/></svg>
<div class="a" style="left:243px;top:163.2px;width:87px;height:11px;background:#3399ff;outline:1px dotted #c08040;outline-offset:-1px"></div>
<div id="t46" class="t" style="left:246px;top:72.3px;font-size:11px;color:#1a1a1a;">cross-arm5</div>
<div id="t47" class="t" style="left:246px;top:83.6px;font-size:11px;color:#1a1a1a;">cross-arm6</div>
<div id="t48" class="t" style="left:246px;top:94.9px;font-size:11px;color:#1a1a1a;">cross-darwin32</div>
<div id="t49" class="t" style="left:246px;top:106.2px;font-size:11px;color:#1a1a1a;">cross-darwin64</div>
<div id="t50" class="t" style="left:246px;top:117.5px;font-size:11px;color:#1a1a1a;">cross-freebsd32</div>
<div id="t51" class="t" style="left:246px;top:128.8px;font-size:11px;color:#1a1a1a;">cross-freebsd64</div>
<div id="t52" class="t" style="left:246px;top:140.10000000000002px;font-size:11px;color:#1a1a1a;">cross-linux32</div>
<div id="t53" class="t" style="left:246px;top:151.4px;font-size:11px;color:#1a1a1a;">cross-linux64</div>
<div id="t54" class="t" style="left:246px;top:162.7px;font-size:11px;color:#fff;">system</div>
<div id="t55" class="t" style="left:246px;top:174.0px;font-size:11px;color:#1a1a1a;">win32-user</div>
<div class="a" style="left:237px;top:84px;width:6px;height:11px;background:#fff"></div>
<svg style="left:237px;top:84px" width="6" height="10" viewBox="0 0 6 10"><path d="M5.2 0.8 V7 M1.2 2.2 V5.2 M0.5 5 H5 M2.8 6.5 L1 9" stroke="#222" stroke-width="1.2" fill="none"/></svg>
<div class="a" style="left:234.3px;top:81px;width:119.5px;height:16.8px;border:3px solid #ec1a22"></div>
<div class="a" style="left:0px;top:0px;width:1px;height:838px;background:#a9c8ea"></div>
<div class="a" style="left:1021px;top:73px;width:1px;height:498px;background:#e2e5e9"></div>
<div class="a" style="left:1021px;top:811px;width:1px;height:26px;background:#e2e5e9"></div>
<div class="a" style="left:1022px;top:0px;width:1px;height:838px;background:#aac8ec"></div>
<div class="a" style="left:1023px;top:0px;width:1px;height:838px;background:linear-gradient(#2050b8,#2a5aa0 50%,#1a2a50 90%,#101018)"></div>
<div class="a" style="left:0px;top:837px;width:1023px;height:1px;background:#b0cdea"></div>
<script>(function(){var W={"t1": 203, "t2": 44.7, "t3": 83.80000000000001, "t4": 35.5, "t5": 35.5, "t6": 36, "t7": 37, "t8": 49, "t9": 43.19999999999999, "t10": 26.5, "t11": 43.5, "t12": 58, "t13": 61.5, "t14": 87.5, "t15": 80, "t16": 32.5, "t17": 28, "t18": 35.5, "t19": 41, "t20": 49, "t21": 66.5, "t22": 107.10000000000002, "t23": 174.70000000000005, "t24": 165.35000000000002, "t25": 127.40000000000003, "t26": 194.60000000000002, "t27": 93.80000000000001, "t28": 134.10000000000002, "t29": 321.30000000000007, "t30": 221.10000000000002, "t31": 77.35000000000002, "t32": 373.20000000000005, "t33": 85.90000000000003, "t34": 139.85000000000002, "t35": 215, "t36": 61, "t37": 77.5, "t38": 56, "t39": 81.0, "t40": 67.69999999999999, "t41": 42, "t42": 116.20000000000005, "t43": 114.20000000000005, "t44": 24.5, "t45": 35};var M={"t1": ["scale", 37], "t2": ["scale", 7], "t3": ["scale", 12], "t4": ["scale", 5], "t5": ["scale", 5], "t6": ["scale", 5], "t7": ["scale", 6], "t8": ["scale", 7], "t9": ["scale", 6], "t10": ["scale", 4], "t11": ["rot", 7], "t12": ["rot", 8], "t13": ["rot", 9], "t14": ["rot", 12], "t15": ["rot", 11], "t16": ["scale", 4], "t17": ["scale", 4], "t18": ["scale", 6], "t19": ["scale", 7], "t20": ["scale", 8], "t21": ["scale", 8], "t22": ["ls", 14], "t23": ["ls", 20], "t24": ["ls", 20], "t25": ["ls", 16], "t26": ["ls", 24], "t27": ["ls", 11], "t28": ["ls", 16], "t29": ["ls", 42], "t30": ["ls", 26], "t31": ["ls", 10], "t32": ["ls", 48], "t33": ["ls", 11], "t34": ["ls", 17], "t35": ["scale", 18], "t36": ["scale", 9], "t37": ["scale", 11], "t38": ["scale", 7], "t39": ["scale", 12], "t40": ["scale", 9], "t41": ["scale", 9], "t42": ["scale", 17], "t43": ["scale", 19], "t44": ["scale", 6], "t45": ["scale", 6]};for(var i in W){var e=document.getElementById(i);if(!e)continue;var m=M[i]||['scale',1];var t=e.style.transform,l=e.style.letterSpacing;e.style.transform=(m[0]=='rot')?'none':'none';e.style.letterSpacing='0px';var w=e.getBoundingClientRect().width;if(m[0]=='rot'){w=e.getBoundingClientRect().width;}if(!(w>0)){e.style.transform=t;e.style.letterSpacing=l;continue;}if(m[0]=='ls'){e.style.letterSpacing=((W[i]-w)/m[1])+'px';e.style.transform=t;}else if(m[0]=='rot'){e.style.letterSpacing=l;e.style.transform='rotate(-90deg) scaleX('+(W[i]/w)+')';}else{e.style.letterSpacing=l;e.style.transform='scaleX('+(W[i]/w)+')';}}})();</script>
</body></html>
